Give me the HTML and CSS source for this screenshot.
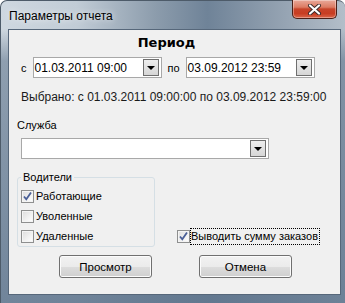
FILE: index.html
```html
<!DOCTYPE html>
<html lang="ru">
<head>
    <meta charset="UTF-8">
    <title>Параметры отчета</title>
    <link rel="stylesheet" href="styles.css">
</head>
<body>
    <div class="window">
        <div class="titlebar">
            <span class="title">Параметры отчета</span>
            <button class="close-btn">
                <svg width="15" height="11" viewBox="0 0 15 11">
                    <path d="M3 1.5 L12 9.5 M12 1.5 L3 9.5" stroke="#3a2a2a" stroke-width="4" stroke-linecap="round"/>
                    <path d="M3 1.5 L12 9.5 M12 1.5 L3 9.5" stroke="#ffffff" stroke-width="2.2" stroke-linecap="round"/>
                </svg>
            </button>
        </div>

        <div class="client">
            <h1 class="period">Период</h1>

            <div class="range-row">
                <span>с</span>
                <div class="combo date">
                    <span class="combo-text">01.03.2011 09:00</span>
                    <span class="combo-arrow"></span>
                </div>
                <span>по</span>
                <div class="combo date">
                    <span class="combo-text">03.09.2012 23:59</span>
                    <span class="combo-arrow"></span>
                </div>
            </div>

            <p class="selected">Выбрано: с 01.03.2011 09:00:00 по 03.09.2012 23:59:00</p>

            <div class="field-label">Служба</div>
            <div class="combo wide">
                <span class="combo-text"></span>
                <span class="combo-arrow"></span>
            </div>

            <div class="bottom-row">
                <fieldset class="group">
                    <legend>Водители</legend>
                    <div class="check-row"><span class="checkbox checked"></span>Работающие</div>
                    <div class="check-row"><span class="checkbox"></span>Уволенные</div>
                    <div class="check-row"><span class="checkbox"></span>Удаленные</div>
                </fieldset>
                <div class="check-row sum-check">
                    <span class="checkbox checked"></span>
                    <span class="focus">Выводить сумму заказов</span>
                </div>
            </div>

            <div class="buttons">
                <button class="btn">Просмотр</button>
                <button class="btn">Отмена</button>
            </div>
        </div>
    </div>
</body>
</html>
```

FILE: styles.css
```css
body {
    margin: 0;
    font-family: "Liberation Sans", Arial, sans-serif;
    font-size: 11px;
    color: #000;
    background: #fff;
}

/* рамка окна */
.window {
    width: 345px;
    height: 303px;
    box-sizing: border-box;
    padding: 0 4px 8px 7px;
    display: flex;
    flex-direction: column;
    border-radius: 7px 7px 0 0;
    border: 1px solid #4d5b69;
    border-bottom: none;
    border-right: none;
    background:
        linear-gradient(180deg, rgba(0, 0, 0, 0) 0px, rgba(0, 0, 0, 0) 28px, rgba(90, 112, 136, 0.55) 60px, rgba(96, 118, 142, 0.85) 100%),
        linear-gradient(90deg, #cfd8e0 0%, #c1ccd6 22%, #8c9cac 45%, #6f8398 60%, #8e9dad 78%, #b3bec9 100%);
}

.titlebar {
    height: 28px;
    display: flex;
    justify-content: space-between;
    align-items: flex-start;
}

.title {
    margin-top: 8px;
    padding-left: 1px;
    font-size: 12px;
    color: #000;
    text-shadow: 0 0 6px rgba(255, 255, 255, 0.9);
}

.close-btn {
    width: 45px;
    height: 19px;
    margin-top: -1px;
    margin-right: 4px;
    padding: 0;
    border: 1px solid #4a2018;
    border-top: none;
    border-radius: 0 0 5px 5px;
    background: linear-gradient(180deg, #e9a99a 0%, #dc7b63 40%, #c7442a 50%, #c83d22 75%, #d9664a 100%);
    box-shadow: inset 0 0 0 1px rgba(255, 255, 255, 0.35);
    display: flex;
    align-items: center;
    justify-content: center;
}

/* клиентская область */
.client {
    flex: 1;
    background: #f0f0f0;
    border: 1px solid #56677a;
    display: flex;
    flex-direction: column;
}

.period {
    margin: 5px 0 0;
    padding-right: 16px;
    text-align: center;
    font-family: "DejaVu Sans", sans-serif;
    font-size: 13px;
    font-weight: bold;
    line-height: 16px;
}

.range-row {
    margin-top: 6px;
    padding-left: 12px;
    display: flex;
    align-items: center;
    gap: 6px;
    height: 21px;
}

.combo {
    height: 21px;
    box-sizing: border-box;
    background: #fff;
    border: 1px solid #a8a8a8;
    display: flex;
    align-items: center;
    justify-content: space-between;
    padding: 0 2px 0 1px;
}

.combo.date {
    width: 129px;
}

.combo.wide {
    width: 248px;
    margin: 6px 0 0 12px;
}

.combo-text {
    font-size: 12px;
}

.combo-arrow {
    width: 16px;
    height: 17px;
    box-sizing: border-box;
    border: 1px solid #6f6f6f;
    background: linear-gradient(180deg, #eeeeee 0%, #e2e2e2 50%, #d6d6d6 100%);
    display: flex;
    align-items: center;
    justify-content: center;
}

.combo-arrow::after {
    content: "";
    border-left: 4px solid transparent;
    border-right: 4px solid transparent;
    border-top: 4px solid #000;
    margin-top: 1px;
}

.selected {
    margin: 12px 0 0;
    padding-left: 12px;
    font-size: 12px;
    line-height: 14px;
    color: #1a1a1a;
}

.field-label {
    margin-top: 14px;
    padding-left: 8px;
    line-height: 14px;
}

.bottom-row {
    margin-top: 11px;
    display: flex;
    align-items: flex-end;
}

.group {
    width: 138px;
    box-sizing: border-box;
    margin: 0 0 0 8px;
    padding: 2px 0 0 3px;
    border: 1px solid #d5dfe5;
    border-radius: 3px;
}

.group legend {
    padding: 0 2px;
    line-height: 14px;
}

.check-row {
    height: 20px;
    display: flex;
    align-items: center;
    gap: 2px;
}

.checkbox {
    width: 13px;
    height: 13px;
    box-sizing: border-box;
    border: 1px solid #8e8f8f;
    background: linear-gradient(135deg, #dcdcdc 0%, #f2f2f2 60%, #ffffff 100%);
    box-shadow: inset 0 0 0 1px #f4f4f4;
    flex-shrink: 0;
}

.checkbox.checked {
    background:
        url("data:image/svg+xml,%3Csvg xmlns='http://www.w3.org/2000/svg' width='11' height='11'%3E%3Cpath d='M2 5.5 L4.3 8.3 L9 1.5' fill='none' stroke='%234a5f97' stroke-width='1.8'/%3E%3C/svg%3E") center / 11px 11px no-repeat,
        linear-gradient(135deg, #dcdcdc 0%, #f2f2f2 60%, #ffffff 100%);
}

.sum-check {
    margin: 0 0 1px 22px;
    gap: 0;
}

.sum-check .focus {
    border: 1px dotted #000;
    line-height: 15px;
    padding: 0 1px 0 0;
}

.buttons {
    margin-top: 8px;
    padding-left: 50px;
    display: flex;
    gap: 47px;
}

.btn {
    width: 93px;
    height: 23px;
    padding: 0;
    border: 1px solid #707070;
    border-radius: 3px;
    font-family: "Liberation Sans", Arial, sans-serif;
    font-size: 11.5px;
    color: #000;
    background: linear-gradient(180deg, #f2f2f2 0%, #ebebeb 50%, #dddddd 51%, #cfcfcf 100%);
    box-shadow: inset 0 0 0 1px #fcfcfc;
}
```
